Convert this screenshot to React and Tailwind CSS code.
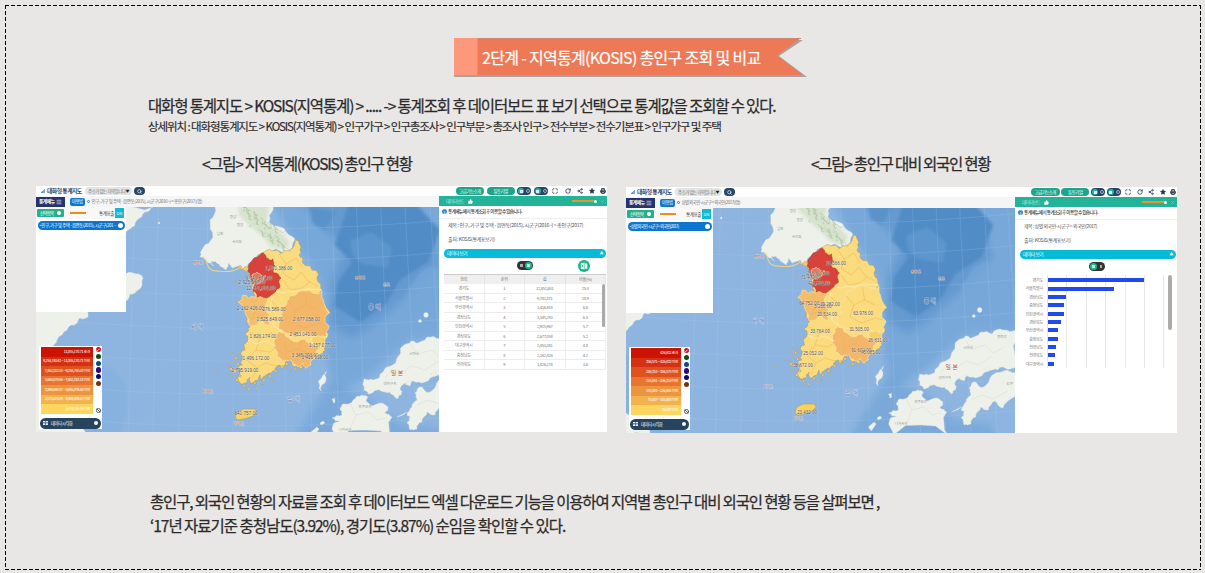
import React from "react";
import { Maximize, RotateCw, Share2, Star, Printer, Search, Menu, ThumbsUp, X, Check, Ban } from "lucide-react";

/* ---------- map geometry ---------- */

// Splits every edge and nudges the middle so that coasts look irregular.
function rough(str, amp = 0.16, depth = 2) {
  let pts = str.split(" ").map((p) => p.split(",").map(Number));
  for (let d = 0; d < depth; d++) {
    const out = [];
    pts.forEach((p, i) => {
      const q = pts[(i + 1) % pts.length];
      const dx = q[0] - p[0];
      const dy = q[1] - p[1];
      const s = Math.sin((p[0] + q[0]) * 12.9 + (p[1] + q[1]) * 7.3);
      out.push(p, [(p[0] + q[0]) / 2 - dy * s * amp, (p[1] + q[1]) / 2 + dx * s * amp]);
    });
    pts = out;
  }
  return pts.map((p) => p[0].toFixed(1) + "," + p[1].toFixed(1)).join(" ");
}

const NORTH = "216,200 215,207 210,220 213,237 203,248 200,257 207,262 214,266 211,261 219,264 226,270 229,263 233,268 240,267 247,271 250,262 262,253 290,251 295,240 293,237 280,227 269,222 273,210 273,200";
const SOUTH = "262,253 272,251 290,251 293,247 295,240 300,250 303,258 312,270 318,282 322,290 324,303 325,323 329,327 328,337 325,347 323,353 318,358 312,360 307,368 303,363 297,366 291,360 288,361 285,368 280,365 275,368 272,372 266,375 263,379 260,375 253,383 250,377 247,380 243,384 237,379 238,368 242,360 245,350 248,340 245,333 250,327 247,317 243,307 238,302 243,295 255,297 253,290 255,283 248,273 252,267 252,260";
const GYEONGGI = "262,253 266,258 273,259 275,266 274,273 281,278 280,287 276,291 270,296 257,297 253,291 255,284 250,277 248,271 252,261";
const CHUNGNAM = "238,302 243,295 255,297 265,295 268,298 266,308 270,315 270,325 262,321 250,326 247,317 243,307";
const GYEONGBUK = "289,297 298,291 313,293 322,291 324,303 325,323 329,327 327,336 318,338 305,332 295,338 285,333 279,330 284,318 282,310 286,305";
const GYEONGNAM = "279,331 285,333 290,339 305,339 314,343 321,347 316,353 312,360 307,368 303,363 297,366 291,360 288,361 282,361 276,350 276,338";
const JAPAN = [
  "465,333 450,335 439,339 427,337 420,342 412,341 410,343 397,358 383,372 373,380 364,379 364,390 368,394 377,390 385,392 393,395 397,399 401,395 400,388 410,382 422,383 430,378 439,375 450,372 470,366",
  "422,387 430,392 439,380 448,377 470,382 470,400 458,404 450,413 442,406 435,415 427,412 422,422 417,429 410,430 407,423 410,417 407,415 412,407 417,400 415,393",
  "362,395 368,397 367,402 372,406 382,403 388,407 385,413 392,417 393,440 337,440 333,425 340,422 332,418 342,415 340,408 345,404 353,400",
  "323,375 327,371 326,380 321,391 319,389",
  "332,399 335,398 335,402 333,403",
];
const CHINA = [
  "120,200 153,207 145,212 137,220 130,229 120,236",
  "120,270 133,273 143,278 138,290 130,294 126,301 120,302",
  "30,305 88,308 88,317 80,318 77,323 67,330 57,340 51,347 50,360 46,390 60,418 72,424 85,431 85,440 30,440",
];
const ISLETS = [
  [236, 282, 1.2], [246, 269, 3.2], [240, 267, 1.8], [241, 301, 2], [236, 358, 1.6], [232, 362, 1.3], [238, 355, 1], [231, 369, 1.8], [235, 371, 2.2],
  [240, 376, 1.6], [229, 366, 1], [238, 364, 1.6], [216, 371, 1], [232, 376, 1.2], [237, 380, 1.8], [244, 386, 1.5], [249, 389, 1.5], [257, 388, 1.3],
  [255, 383, 1.6], [264, 380, 1.6], [270, 376, 1.6], [276, 371, 1.6], [282, 367, 1.8], [287, 364, 1.8], [295, 369, 1.5], [301, 367, 2.3], [306, 364, 1.8],
  [290, 371, 1], [272, 380, 1], [262, 385, 0.9], [233, 353, 0.9], [248, 316, 1],
];

function KoreaMap({ box, labels, eastFill, wide }) {
  const land = "#eef0ea";
  return (
    <svg viewBox={box} preserveAspectRatio="none" className="block h-full w-full" fontFamily="'Liberation Sans','Noto Sans CJK KR',sans-serif">
      <defs>
        <filter id="soft" x="-20%" y="-20%" width="140%" height="140%">
          <feGaussianBlur stdDeviation="4" />
        </filter>
        <filter id="soft2" x="-20%" y="-20%" width="140%" height="140%">
          <feGaussianBlur stdDeviation="1.5" />
        </filter>
        <clipPath id="north"><polygon points={rough(NORTH)} /></clipPath>
      </defs>
      <rect x="30" y="200" width="440" height="245" fill="#8db5e0" />
      <path d="M270 200H470V335L410 340L370 375L335 395L325 350L328 320L320 280L300 250L290 235Z" fill="#78a8d9" filter="url(#soft)" />
      <path d="M300 200H415L440 262L402 300L378 322L352 338L330 326L332 280L345 250L325 230Z" fill="#659ad0" filter="url(#soft)" />
      <path d="M350 200H412L440 230L428 262L400 280L385 305L360 322L334 306L338 282L352 262L335 245Z" fill="#518cc6" filter="url(#soft2)" />
      <path d="M350 240L372 232L392 248L388 268L362 264L352 255Z" fill="#669dd2" opacity=".6" filter="url(#soft2)" />
      <path d="M420 272L432 266L445 285L430 310L405 318L408 290Z" fill="#76a7d9" opacity=".7" filter="url(#soft2)" />
      <path d="M310 207L336 212L325 230L313 224Z" fill="#5a92ca" filter="url(#soft2)" />
      <path d="M30 366Q110 350 125 385Q132 400 120 432L95 440H30Z" fill="#86b1de" opacity=".8" filter="url(#soft2)" />
      <path d="M330 380L370 400L400 425L440 430V445H290Z" fill="#6ea2d6" opacity=".6" filter="url(#soft)" />
      <g stroke="#b5d0ec" strokeWidth=".35" fill="none" opacity=".55">
        {[132, 156, 181, 207, 233, 258, 284, 309, 335, 360, 385, 410, 436, 461].map((x) => (
          <path key={x} d={`M${x + (x - 233) * -0.03} 200L${x + (x - 233) * 0.04} 440`} />
        ))}
        {[226, 258, 292, 325, 358, 391, 423].map((y) => (
          <path key={y} d={`M30 ${y - 7}Q240 ${y + 14} 470 ${y - 8}`} />
        ))}
      </g>
      <g fill={land} stroke="#dfe3dc" strokeWidth=".4">
        {CHINA.map((p) => <polygon key={p} points={rough(p)} />)}
        {JAPAN.map((p) => <polygon key={p} points={rough(p, 0.2)} />)}
        <polygon points={rough(NORTH)} />
        <circle cx="426" cy="315" r="2.4" />
        <circle cx="420" cy="321" r="1.5" />
        <circle cx="159" cy="223" r=".9" />
        <path d="M311 432L317 427L319 429L314 436ZM407 412L397 417L403 415ZM430 374L436 372L435 376ZM320 423L323 421L325 423L321 425ZM405 384L412 380L410 386Z" />
      </g>
      <g clipPath="url(#north)">
        <path d="M240 200L270 204L266 222L280 232L290 242L286 250L272 247L262 236L250 226L238 214Z" fill="#cfdfc4" opacity=".75" filter="url(#soft2)" />
        <g fill="none" stroke="#9fbd90" strokeLinecap="round" opacity=".6">
          {Array.from({ length: 60 }, (_, i) => {
            const t = ((i * 37) % 61) / 61;
            const x = 244 + t * 42 + ((i * 17) % 13) - 6;
            const y = 206 + t * 36 + ((i * 29) % 17) - 6;
            return <path key={i} strokeWidth={0.4 + (i % 3) * 0.35} d={`M${x} ${y}l${2 - (i % 4)} ${1 + (i % 3)}l1.500 ${(i % 3) - 1}`} />;
          })}
        </g>
      </g>
      <path d="M202 257Q206 258 207 264Q210 272 219 271Q232 273 239 268L247 269" fill="none" stroke="#e5d487" strokeWidth="1.1" />
      <g stroke="#a7946a" strokeWidth=".5">
        <polygon points={rough(SOUTH, 0.3)} fill="#fadb7e" />
        {ISLETS.map(([x, y, r], i) => (
          <path key={i} d={`M${x - r} ${y}l${r * 0.7} ${-r * 0.8}l${r * 0.9} ${r * 0.2}l${r * 0.3} ${r * 0.8}l${-r} ${r * 0.7}Z`} fill="#f6c871" />
        ))}
        <path d="M235 418L237 412L244 409L255 409L257 412L253 416L244 419L238 420Z" fill="#f9d25e" />
      </g>
      <g stroke="#fbe7b0" strokeWidth=".6">
        <polygon points={rough(CHUNGNAM, 0.2)} fill="#f4bd6c" />
        <polygon points={rough(GYEONGBUK, 0.2)} fill={eastFill} />
        <polygon points={rough(GYEONGNAM, 0.2)} fill="#f3b769" />
        <polygon points={rough("310,340 318,336 327,337 324,346 318,347", 0.2)} fill="#f8d06b" />
        <polygon points={rough(GYEONGGI, 0.2)} fill="#d7433a" stroke="#bd3a30" />
        <polygon points={rough("252,277 257,272 261,275 266,276 263,281 257,284 253,282", 0.25)} fill="#e5735a" />
      </g>
      <g fill="none" stroke="#efac50" strokeWidth=".6" opacity=".75">
        <path d="M279 254L286 264L283 274L294 280L301 272L308 281L318 286M286 264L296 258L303 268M283 280L290 290L302 288L310 282M252 300L257 309L264 305M257 309L252 319L264 315M288 301L296 310L307 305L318 310M296 310L292 322L304 328L318 323M307 305L305 292M318 323L326 325M250 332L260 338L272 333M260 338L256 350L270 352L276 347M256 350L247 360L257 368L266 363L276 366M257 368L252 379M284 340L287 352L298 349L310 354M298 349L302 340M287 352L284 361M270 300L277 306L275 316L282 322" />
      </g>
      <path d="M276 291L283 293L290 291L298 292L306 289L322 290M272 298L270 308L276 313L273 325L281 331M248 340L256 344L266 341L276 346" fill="none" stroke="#fff3cb" strokeWidth=".6" />
      <g fill="none" stroke="#d8dbd3" strokeWidth=".5">
        <path d="M385 378L393 370L400 374L412 366L425 370L439 361M410 344L418 354L432 350L440 358L452 352M350 404L356 415L368 412L377 420L386 418M356 415L350 430M417 405L428 400L440 404L455 396" />
      </g>
      <g textAnchor="middle" stroke="#fff" strokeWidth=".6" strokeOpacity=".7" paintOrder="stroke" fontSize="6">
        <text x="197" y="328.500" fill="#5a75b3">서 해</text>
        <text x="374.500" y="308.500" fill="#465fa3">동 해</text>
        <text x="293.500" y="400.500" fill="#6a80b8">남 해</text>
        <text x="397" y="374.500" fill="#b2573f">일 본</text>
        <g fontSize="3.800" strokeWidth=".4">
          <text x="198" y="263.500" fill="#b94b3e">백령도</text>
          <text x="360" y="278.500" fill="#96502f">울릉도</text>
          <text x="386.500" y="285.500" fill="#b8603f">독도</text>
          <text x="207.500" y="393" fill="#b8603f">가거도</text>
          <text x="238.500" y="425" fill="#b8603f">마라도</text>
        </g>
        <g fontSize="3.500" fill="#8b9389" strokeWidth=".2">
          <text x="233" y="217.500">평성</text>
          <text x="240" y="226">평양</text>
          <text x="220" y="235">남포</text>
          <text x="237" y="243">사리원</text>
          <text x="414" y="354.500">시마네</text>
          <text x="390" y="384.500">야마구치</text>
          <text x="365" y="408">후쿠오카</text>
          <text x="345" y="430.500">나가사키</text>
          {wide && <text x="449" y="343">돗토리</text>}
          {wide && <text x="457" y="390">도쿠</text>}
        </g>
      </g>
      <g textAnchor="middle" fontSize="4.600" fill="#55504b" stroke="#fff" strokeWidth=".6" strokeOpacity=".55" paintOrder="stroke">
        {labels.map(([t, x, y]) => <text key={t} x={x} y={y + 1.7}>{t}</text>)}
      </g>
    </svg>
  );
}

/* ---------- data ---------- */

const LABELS_LEFT = [
  ["1,521,386.00", 279, 268], ["9,741,871.00", 259, 278], ["2,925,967.00", 252, 282.5], ["12,851,601.00", 261, 288],
  ["2,162,426.00", 250.5, 308.5], ["276,589.00", 274, 309], ["1,525,849.00", 270, 319], ["2,677,058.00", 306.5, 319],
  ["1,826,174.00", 263, 336.5], ["2,453,041.00", 303, 334.5], ["1,157,077.00", 322.5, 345], ["1,496,172.00", 256, 358.5],
  ["3,345,293.00", 305, 355.5], ["3,416,918.00", 315, 357.5], ["1,795,919.00", 245, 370], ["641,757.00", 246, 413.7],
];
const LABELS_RIGHT = [
  ["28,566.00", 836, 263], ["266,607.00", 818, 273], ["71,470.00", 811, 277], ["426,832.00", 819, 283],
  ["64,752.00", 809, 303.5], ["5,208.00", 823, 306.5], ["39,282.00", 830, 304], ["20,534.00", 827, 314], ["63,978.00", 863, 313.5],
  ["33,764.00", 820, 331.5], ["31,505.00", 859, 329.5], ["26,831.00", 878, 340.5], ["25,052.00", 813, 353.5],
  ["91,602.00", 861, 350.5], ["45,085.00", 871, 352.5], ["38,872.00", 803, 365], ["23,432.00", 807, 412],
].map(([t, x, y]) => [t, 196.7 + (x - 757.7) / 0.968, y + 5]);

const LEGEND_LEFT = ["11,055,170.71 초과", "9,258,740.43 ~ 11,055,170.71 미만", "7,462,310.14 ~ 9,258,740.43 미만", "5,665,879.86 ~ 7,462,310.14 미만", "3,869,449.57 ~ 5,665,879.86 미만", "2,073,019.29 ~ 3,869,449.57 미만", "2,073,019.29 미만"];
const LEGEND_RIGHT = ["426,832 초과", "356,575 ~ 426,832 미만", "286,318 ~ 356,575 미만", "216,061 ~ 286,318 미만", "145,804 ~ 216,061 미만", "75,547 ~ 145,804 미만", "75,547 미만"];
const LEGEND_BG = ["bg-[#cc1200]", "bg-[#d43012]", "bg-[#de5220]", "bg-[#e8742f]", "bg-[#ed943f]", "bg-[#f3b24e]", "bg-[#fdd55f]"];
const DOTS = ["bg-[#124a12]", "bg-[#0f4a7e]", "bg-[#2a0a78]", "bg-[#0a0a6e]", "bg-[#7c330a]"];

const ROWS = [
  ["경기도", "1", "12,851,601", "25.0"], ["서울특별시", "2", "9,741,871", "18.9"], ["부산광역시", "3", "3,416,918", "6.6"],
  ["경상남도", "4", "3,345,293", "6.5"], ["인천광역시", "5", "2,925,967", "5.7"], ["경상북도", "6", "2,677,058", "5.2"],
  ["대구광역시", "7", "2,453,041", "4.8"], ["충청남도", "8", "2,162,426", "4.2"], ["전라북도", "9", "1,826,174", "3.6"],
];
const BARS = [["경기도", 95.5], ["서울특별시", 66], ["경상남도", 17.5], ["충청남도", 16], ["인천광역시", 15.5], ["경상북도", 12.5], ["부산광역시", 9.5], ["충청북도", 9.5], ["전라남도", 7.5], ["전라북도", 6.5], ["대구광역시", 6]];

/* ---------- dashboard pieces ---------- */

function Toggle() {
  return (
    <span className="flex h-[8px] w-[14px] items-center justify-between rounded-full bg-[#27456a] px-[1px]">
      <i className="flex size-[6px] items-center justify-center rounded-full bg-[#1fb99b]"><i className="size-[3px] bg-white/80" /></i>
      <i className="size-[4px] rounded-full border border-[#9eb0c4]" />
    </span>
  );
}

function TopBar() {
  return (
    <div className="flex h-[10px] items-center justify-between bg-white">
      <div className="flex items-center">
        <svg viewBox="0 0 5 5" className="ml-[5px] size-[4px]"><path d="M0 5V3.500h1V5M1.500 5V2.500h1V5M3 5V1.200h.8V5M4.200 5V0H5V5" fill="#2b80c9" /></svg>
        <b className="ml-[2px] w-[38px] text-[5.800px] leading-none tracking-[-0.5px] whitespace-nowrap text-[#2d3f66]">대화형 통계지도</b>
        <span className="flex h-[8px] w-[47px] items-center justify-between rounded-full bg-[#e3e4e4] pr-[3px] pl-[3px] text-[4.500px] leading-none tracking-[-0.5px] whitespace-nowrap text-[#777]">
          주소가 없는 지역입니다<i className="text-[4px] text-[#222] not-italic">▼</i>
        </span>
        <span className="ml-[2px] flex h-[8px] w-[11px] items-center justify-center rounded-full bg-[#24476a]"><Search className="size-[5px] text-white" strokeWidth={3} /></span>
      </div>
      <div className="flex w-[26.500%] items-center justify-between pr-px text-[#22364e]">
        <span className="flex h-[8px] w-[28.500px] items-center justify-center rounded-full bg-[#1ba68c] text-[4.400px] leading-none tracking-[-0.5px] whitespace-nowrap text-white">고급기능소개</span>
        <span className="flex h-[8px] w-[28px] items-center justify-center rounded-full bg-[#1ba68c] text-[4.400px] leading-none tracking-[-0.4px] whitespace-nowrap text-white">튜토리얼</span>
        <Toggle />
        <Toggle />
        <Maximize className="mx-[2px] size-[6px]" strokeWidth={3} />
        <RotateCw className="mx-[2px] size-[6px]" strokeWidth={3} />
        <Share2 className="mx-[2px] size-[6px]" strokeWidth={2.5} />
        <Star className="mx-[2px] size-[6px] fill-current" />
        <Printer className="size-[6px] fill-[#8a95a3]" strokeWidth={3} />
      </div>
    </div>
  );
}

function CrumbBar({ crumb, crumbClass }) {
  return (
    <div className="flex h-[11px] items-center bg-[#f5f5f5]">
      <span className="flex h-[10px] w-[28.500px] items-center justify-center gap-[1px] bg-[#24346f] text-[4.800px] leading-none font-bold tracking-[-0.5px] whitespace-nowrap text-white">통계메뉴<Menu className="size-[6px]" strokeWidth={2.5} /></span>
      <span className="ml-[5px] flex h-[8px] w-[15.500px] items-center justify-center rounded-[2px] bg-[#1077cd] text-[4.400px] leading-none tracking-[-0.3px] text-white">이용법</span>
      <i className="ml-[2px] size-[3px] rounded-full border border-[#2c82d0] bg-white" />
      <span className={"ml-[1.500px] leading-none whitespace-nowrap text-[#777] " + crumbClass}>{crumb}</span>
    </div>
  );
}

function SidePanel({ item, itemClass, narrow }) {
  return (
    <div className={"absolute top-0 left-0 h-[105px] bg-white " + (narrow ? "w-[87px]" : "w-[90px]")}>
      <div className="flex h-[12px] items-center bg-[#f8f8f8] pr-[2px] pl-px">
        <span className="flex h-[8.500px] w-[27px] items-center justify-between rounded-[1px] bg-[#25b08c] px-[3px] text-[4.300px] leading-none tracking-[-0.5px] text-white">선택항목<i className="size-[4px] rounded-full bg-white" /></span>
        <i className="ml-[6px] h-[1.500px] w-[15.500px] bg-[#ee8d1b]" />
        <span className="ml-auto text-[4.600px] leading-none tracking-[-0.5px] text-[#444]">통계표출</span>
        <span className="ml-px flex h-[9.500px] w-[9px] items-center justify-center bg-[#0cbcd4] text-[4px] leading-none text-white">ON</span>
      </div>
      <div className="mx-[1.500px] mt-[2px] flex h-[9px] items-center justify-between rounded-full bg-[#0d75cb] px-[2px] text-white">
        <span className={"leading-none whitespace-nowrap " + itemClass}>• {item}</span>
        <i className="size-[4.500px] shrink-0 rounded-full bg-white" />
      </div>
    </div>
  );
}

function Legend({ rows, narrow }) {
  return (
    <div className={"absolute bottom-[3px] left-[3px] flex h-[83px] flex-col bg-white pt-[1px] " + (narrow ? "w-[61px]" : "w-[63px]")}>
      <div className="flex gap-[3px] pl-[1.500px]">
        <div className={"flex flex-col " + (narrow ? "w-[50px]" : "w-[52px]")}>
          {rows.map((r, i) => (
            <span key={r} className={"flex h-[9.500px] items-center justify-end pr-[2.500px] text-[3.700px] leading-none tracking-[-0.3px] whitespace-nowrap text-white " + LEGEND_BG[i]}>{r}</span>
          ))}
        </div>
        <div className="flex flex-col items-center gap-[1.600px]">
          <span className="flex size-[5.200px] items-center justify-center rounded-full bg-[#c8101e]"><Check className="size-[4px] text-white" strokeWidth={5} /></span>
          {DOTS.map((d) => <i key={d} className={"size-[5.200px] rounded-full " + d} />)}
          <Ban className="mt-auto mb-px size-[5px] text-[#394650]" strokeWidth={4} />
        </div>
      </div>
      <div className="mx-[1px] mt-[4px] flex h-[11px] items-center rounded-full bg-[#27445f] px-[3px] text-white">
        <svg viewBox="0 0 5 4" className="h-[4px] w-[5px]"><path d="M0 0h2v1.600H0zM2.600 0h2.400v1.600H2.600zM0 2.200h2V4H0zM2.600 2.200h2.400V4H2.600z" fill="#e6edf4" /></svg>
        <span className="ml-[3px] text-[4.300px] leading-none tracking-[-0.5px]">데이터 시각화</span>
        <i className="ml-auto size-[4px] rounded-full bg-white" />
      </div>
    </div>
  );
}

function DataTable() {
  return (
    <div className="relative ml-[5px] w-[162px] border-t border-[#ccc] text-[4.100px] leading-none tracking-[-0.3px] text-[#777]">
      <div className="grid h-[9.500px] grid-cols-4 bg-[#efefef]">
        {["항목", "순위", "값", "비율(%)"].map((h) => <span key={h} className="flex items-center justify-center border-r border-[#e4e4e4]">{h}</span>)}
      </div>
      {ROWS.map((r) => (
        <div key={r[0]} className="grid h-[9.500px] grid-cols-4 border-b border-[#ececec]">
          {r.map((c, i) => <span key={i} className="flex items-center justify-center border-r border-[#efefef]">{c}</span>)}
        </div>
      ))}
      <i className="absolute top-[9px] right-[1px] h-[43px] w-[3.500px] rounded-full bg-[#a9a9a9]" />
    </div>
  );
}

function BarChart() {
  return (
    <div className="flex">
      <div className="w-[28px] pt-[1.500px]">
        {BARS.map(([n]) => <span key={n} className="flex h-[8.350px] items-center justify-end text-[4.100px] leading-none tracking-[-0.3px] whitespace-nowrap text-[#777]">{n}</span>)}
      </div>
      <div className="ml-[4px] h-[93px] w-[117px] border-l border-[#e6e6e6] bg-[repeating-linear-gradient(to_right,transparent_0_18.4px,#e8e8e8_18.4px_19.4px)] pt-[1.500px]">
        {BARS.map(([n, w]) => <span key={n} className="flex h-[8.350px] items-center"><i className="h-[4px] bg-[#2149f2]" style={{ width: w }} /></span>)}
      </div>
      <i className="ml-[4px] h-[55px] w-[3.500px] shrink-0 rounded-full bg-[#ababab]" />
    </div>
  );
}

function DataPanel({ title, titleClass, chart }) {
  return (
    <div className="flex min-w-0 flex-1 flex-col overflow-hidden bg-white">
      <div className="flex h-[10px] items-center bg-[#22b398] pr-[2px] pl-[7px]">
        <span className="text-[4.600px] leading-none tracking-[-0.65px] text-[#b9ece0]">데이터보드</span>
        <ThumbsUp className="ml-[4px] size-[5px] fill-white text-white" />
        <i className="ml-auto h-[1.500px] w-[22px] bg-[#e5962e]" />
        <i className="size-[3px] rounded-full bg-white" />
        <X className="ml-[3px] size-[5px] text-[#98c9bd]" strokeWidth={2} />
      </div>
      <div className="flex h-[12.500px] shrink-0 items-center border-b border-[#eee] pl-[3px]">
        <i className="flex size-[5px] items-center justify-center rounded-full bg-[#3a80c8] text-[4px] leading-none font-bold text-white not-italic">i</i>
        <span className="ml-[1px] text-[4.600px] leading-none font-medium tracking-[-0.52px] whitespace-nowrap text-[#333]">통계메뉴에서 통계조회 후 이용할 수 있습니다.</span>
      </div>
      <div className={"flex h-[13px] shrink-0 items-center pl-[9px] leading-none whitespace-nowrap text-[#555] " + titleClass}>{title}</div>
      <div className="flex h-[13px] shrink-0 items-center pl-[9px] text-[5px] leading-none tracking-[-0.4px] text-[#555]">출처 : KOSIS(통계표보기)</div>
      <div className="mt-[4.500px] mr-[1px] ml-[5px] flex h-[8.500px] shrink-0 items-center justify-between rounded-full bg-[#06bbd7] px-[3px] text-[4.700px] leading-none tracking-[-0.4px] text-white">
        데이터 보기<i className="text-[4px] not-italic">▲</i>
      </div>
      <div className={"flex h-[16px] shrink-0 items-center " + (chart ? "pl-[74px]" : "pl-[78px]")}>
        <span className={"flex h-[8.500px] w-[16px] items-center justify-between rounded-full bg-[#333] px-[1px] " + (chart ? "flex-row-reverse" : "")}>
          <i className="mr-[2px] ml-[2px] h-[3.500px] w-[2.500px] bg-[#aaa]" />
          <i className="flex size-[7px] items-center justify-center rounded-full bg-[#1dbb94]"><i className="size-[2.500px] bg-[#b9ece0]" /></i>
        </span>
        {!chart && (
          <svg viewBox="0 0 12 12" className="ml-[45px] size-[12px]">
            <circle cx="6" cy="6" r="6" fill="#12b886" />
            <path d="M2.800 3.200L6.500 2.600V9.500L2.800 8.800ZM7 3.400H9.300V8.700H7Z" fill="#fff" />
            <path d="M3.700 4.700L5.500 7.300M5.500 4.700L3.700 7.300" stroke="#12b886" strokeWidth=".7" />
          </svg>
        )}
      </div>
      {chart ? <BarChart /> : <DataTable />}
    </div>
  );
}

function Dashboard({ narrow, crumb, crumbClass, item, itemClass, legend, box, labels, eastFill, title, titleClass }) {
  return (
    <div className={"flex h-[246px] flex-col overflow-hidden bg-white " + (narrow ? "mt-px w-[551px]" : "w-[571px]")}>
      <TopBar />
      <div className="flex h-[236px]">
        <div className={"shrink-0 " + (narrow ? "w-[389px]" : "w-[403px]")}>
          <CrumbBar crumb={crumb} crumbClass={crumbClass} />
          <div className="relative h-[225px] overflow-hidden">
            <KoreaMap box={box} labels={labels} eastFill={eastFill} wide={narrow} />
            <SidePanel item={item} itemClass={itemClass} narrow={narrow} />
            <Legend rows={legend} narrow={narrow} />
          </div>
        </div>
        <DataPanel title={title} titleClass={titleClass} chart={narrow} />
      </div>
    </div>
  );
}

/* ---------- page ---------- */

function DashedFrame() {
  return (
    <svg className="pointer-events-none absolute inset-0 h-[573px] w-[1205px]" fill="none" stroke="#000" strokeDasharray="4 2">
      <path d="M5 5.500H1201M5 569.500H1201M5.500 5V570M1200.500 5V570" />
    </svg>
  );
}

function Ribbon() {
  return (
    <div className="relative ml-[454px] h-[40px] w-[354px]">
      <svg viewBox="0 0 354 40" className="absolute inset-0 h-[40px] w-[354px]">
        <path d="M0 2H349L325 18L353 39H0Z" fill="#aaa29e" />
        <path d="M0 0H347L323 17.500L349 37H0Z" fill="#ee7956" />
        <path d="M0 .5H347" stroke="#c98672" strokeWidth="1" />
        <path d="M0 0H23.500V37H0Z" fill="#fd987b" />
      </svg>
      <h1 className="relative flex h-[38px] items-center pl-[28px] text-[16px] leading-none font-normal tracking-[-0.69px] whitespace-nowrap text-white [-webkit-text-stroke:0.2px]">2단계 - 지역통계(KOSIS) 총인구 조회 및 비교</h1>
    </div>
  );
}

export default function App() {
  return (
    <main className="relative flex h-[573px] w-[1205px] flex-col overflow-hidden bg-[#e8e7e5] pt-[38px] font-['Noto_Sans_CJK_KR',sans-serif] text-[#2b2a29]">
      <DashedFrame />
      <Ribbon />
      <p className="mt-[16px] ml-[148px] h-[22px] text-[15.500px] leading-[22px] tracking-[-1.15px] whitespace-nowrap [-webkit-text-stroke:0.25px]">대화형 통계지도 &gt; KOSIS(지역통계) &gt; ..... -&gt; 통계조회 후 데이터보드 표 보기 선택으로 통계값을 조회할 수 있다.</p>
      <p className="ml-[148px] h-[20px] text-[11.500px] leading-[20px] tracking-[-1.1px] whitespace-nowrap [-webkit-text-stroke:0.15px]">상세위치 : 대화형통계지도 &gt; KOSIS(지역통계) &gt; 인구가구 &gt; 인구총조사 &gt; 인구부문 &gt; 총조사 인구 &gt; 전수부분 &gt; 전수기본표 &gt; 인구가구 및 주택</p>
      <div className="mt-[16px] flex h-[22px] text-[15.500px] leading-[22px] tracking-[-1.28px] whitespace-nowrap [-webkit-text-stroke:0.25px]">
        <h2 className="ml-[202px] w-[609px]">&lt;그림&gt; 지역통계(KOSIS) 총인구 현황</h2>
        <h2>&lt;그림&gt; 총인구 대비 외국인 현황</h2>
      </div>
      <div className="mt-[12px] ml-[36px] flex h-[247px] items-start gap-[19px]">
        <Dashboard
          crumb="인구, 가구 및 주택 - 읍면동(2015), 시군구(2016~) > 총인구(2017)(명)"
          crumbClass="text-[4.500px] tracking-[-0.38px]"
          item="인구, 가구 및 주택 - 읍면동(2015), 시군구(201…"
          itemClass="text-[4.300px] tracking-[-0.32px]"
          legend={LEGEND_LEFT}
          box="36 207 403 225"
          labels={LABELS_LEFT}
          eastFill="#f3b769"
          title="제목 : 인구, 가구 및 주택 - 읍면동(2015), 시군구(2016~) > 총인구(2017)"
          titleClass="text-[5.100px] tracking-[-0.32px]"
        />
        <Dashboard
          narrow
          crumb="성별 외국인-시군구 > 외국인(2017)(명)"
          crumbClass="text-[4.400px] tracking-[-0.5px]"
          item="성별 외국인-시군구 > 외국인(2017)"
          itemClass="text-[4.200px] tracking-[-0.6px]"
          legend={LEGEND_RIGHT}
          box="60.600 213 401.900 225"
          labels={LABELS_RIGHT}
          eastFill="#fadb7e"
          title="제목 : 성별 외국인-시군구 > 외국인(2017)"
          titleClass="text-[4.900px] tracking-[-0.4px]"
        />
      </div>
      <p className="mt-[56px] ml-[150px] h-[24px] text-[15.500px] leading-[24px] tracking-[-1.16px] whitespace-nowrap [-webkit-text-stroke:0.25px]">총인구, 외국인 현황의 자료를 조회 후 데이터보드 엑셀 다운로드 기능을 이용하여 지역별 총인구 대비 외국인 현황 등을 살펴보면 ,</p>
      <p className="ml-[150px] h-[24px] text-[15.500px] leading-[24px] tracking-[-1.03px] whitespace-nowrap [-webkit-text-stroke:0.25px]">‘17년 자료기준 충청남도(3.92%), 경기도(3.87%) 순임을 확인할 수 있다.</p>
    </main>
  );
}
